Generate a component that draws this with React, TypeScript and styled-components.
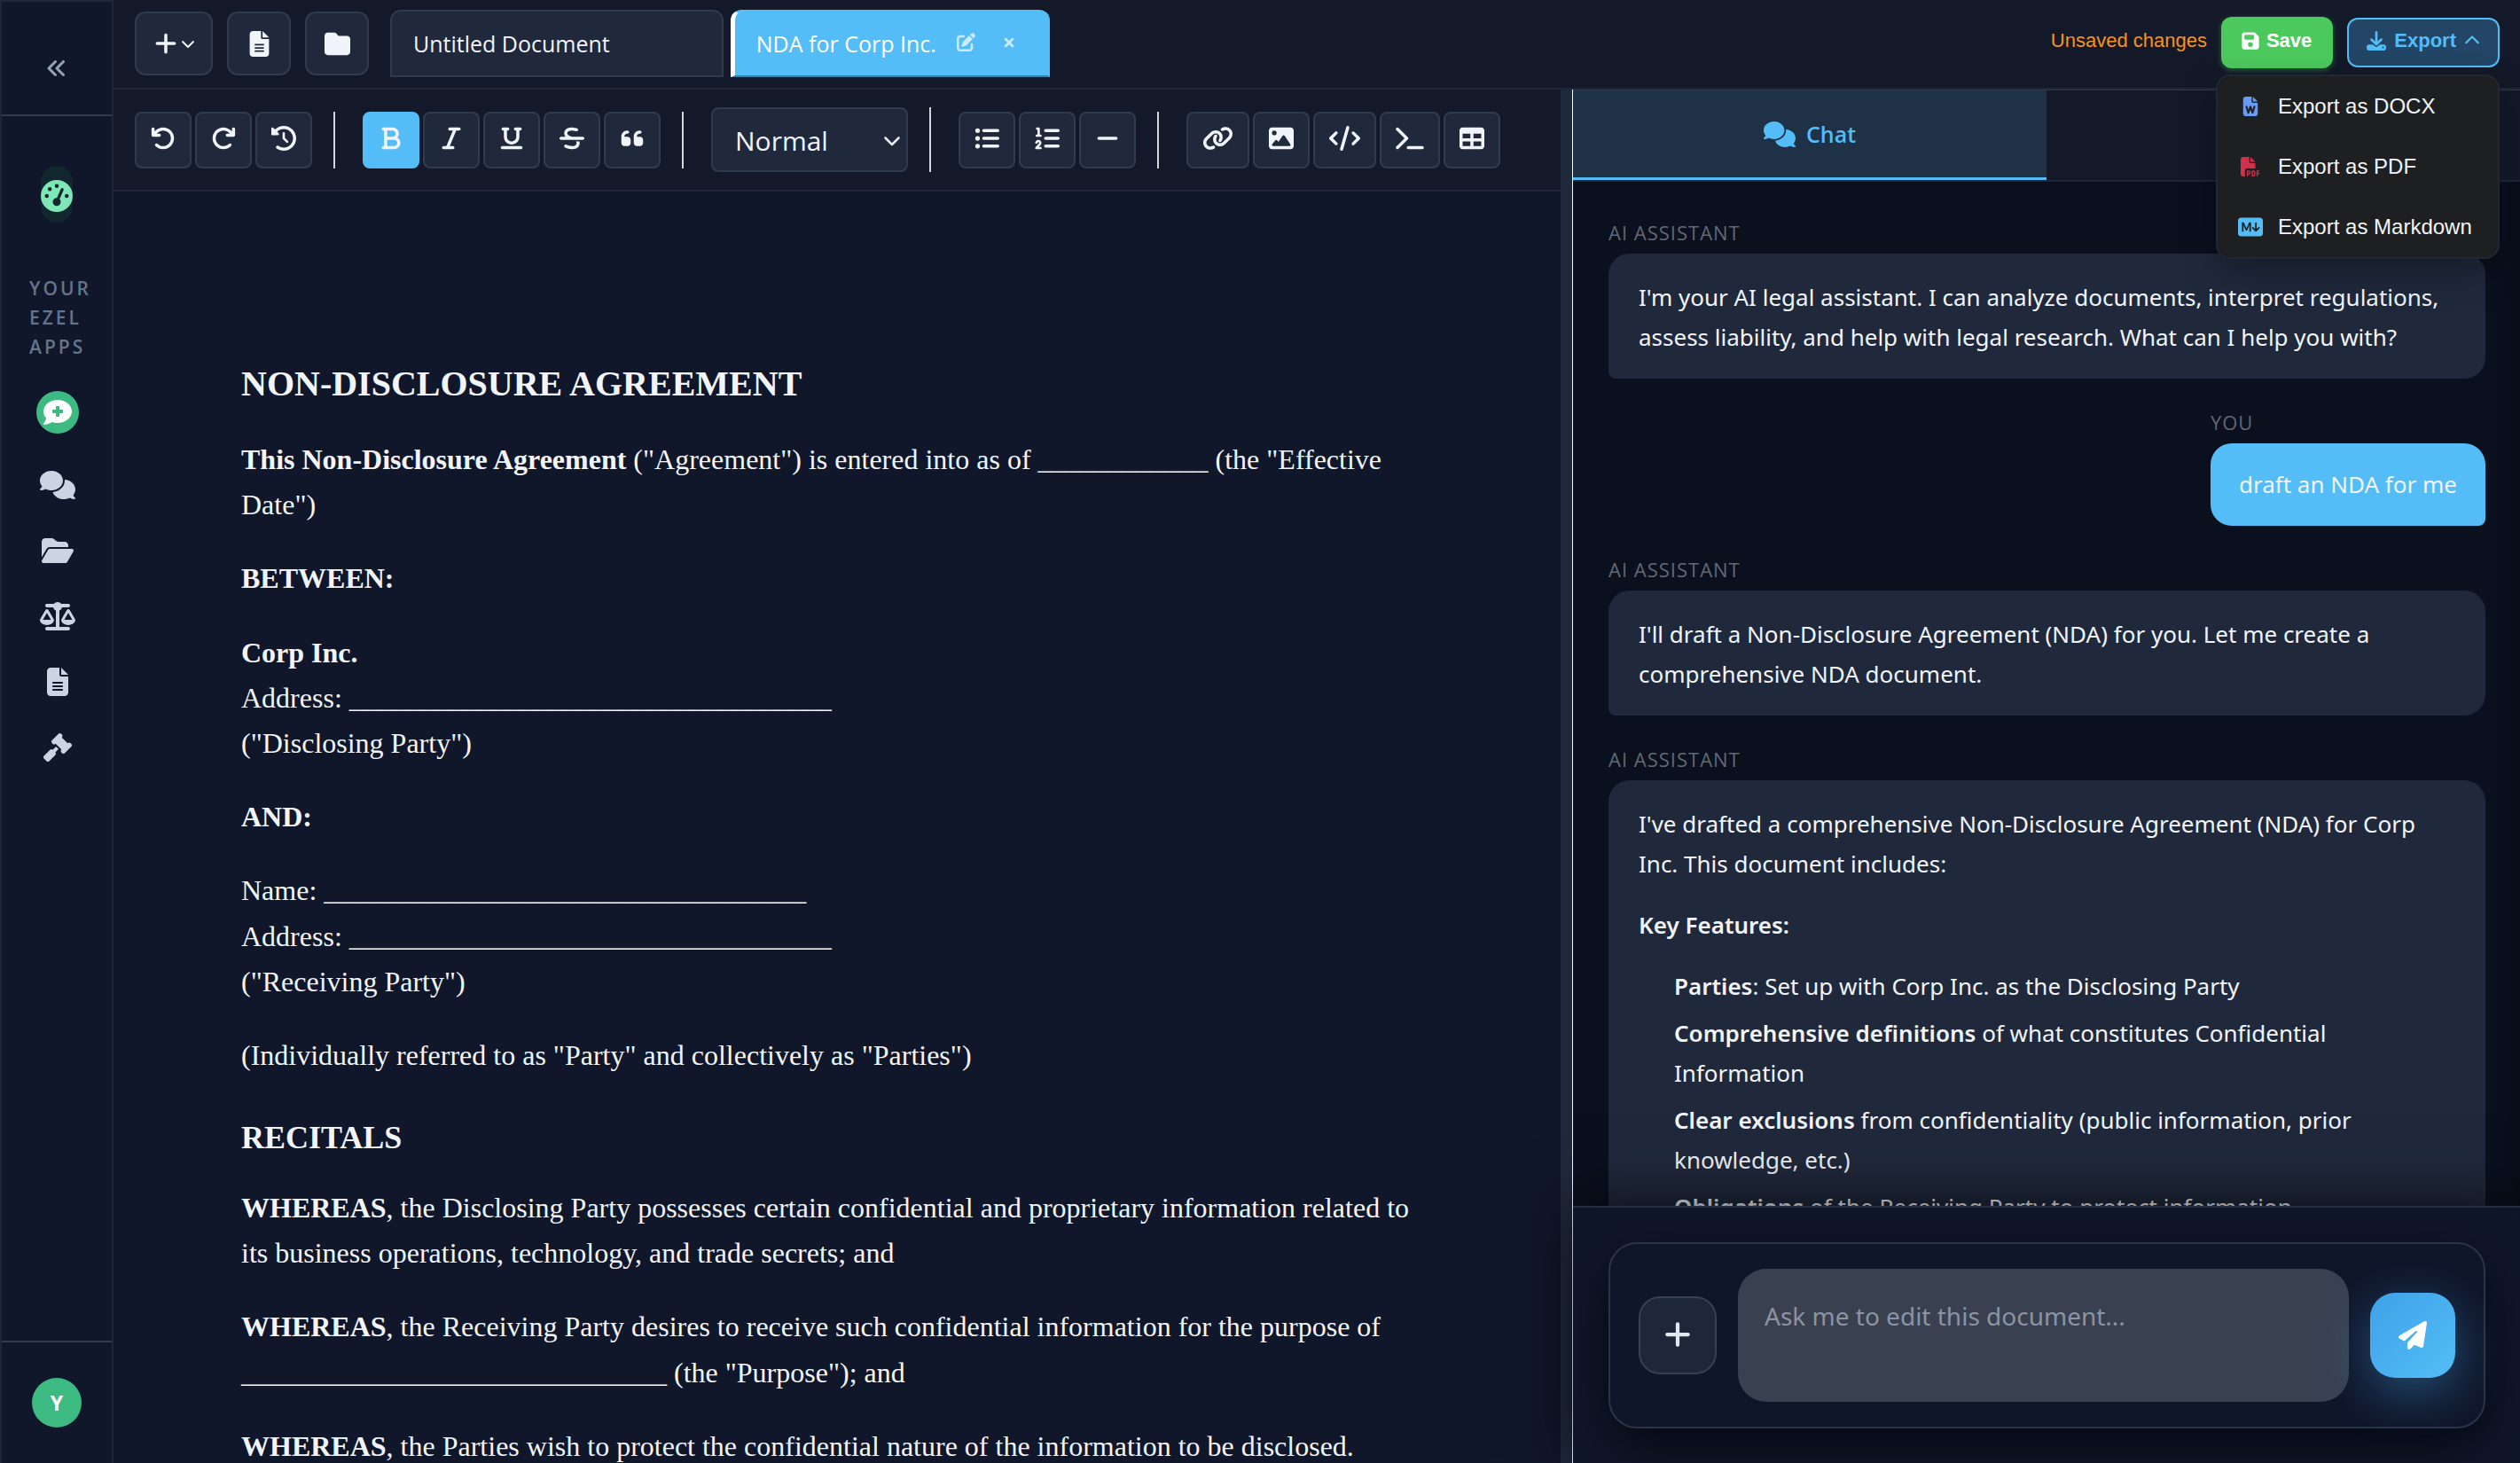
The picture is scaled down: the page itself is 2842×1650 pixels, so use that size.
import React, { useState } from "react";
import styled, { createGlobalStyle, css } from "styled-components";
import {
  FaAnglesLeft,
  FaArrowRotateLeft,
  FaArrowRotateRight,
  FaBold,
  FaChevronDown,
  FaChevronUp,
  FaClockRotateLeft,
  FaCode,
  FaCommentMedical,
  FaComments,
  FaDownload,
  FaFileLines,
  FaFilePdf,
  FaFileWord,
  FaFloppyDisk,
  FaFolder,
  FaFolderOpen,
  FaGaugeHigh,
  FaGavel,
  FaImage,
  FaItalic,
  FaLink,
  FaListOl,
  FaListUl,
  FaMinus,
  FaPaperPlane,
  FaPenToSquare,
  FaPlus,
  FaQuoteLeft,
  FaScaleBalanced,
  FaStrikethrough,
  FaTable,
  FaTerminal,
  FaUnderline,
} from "react-icons/fa6";
import { BsMarkdownFill } from "react-icons/bs";

const sans = `"Open Sans", "Noto Sans", sans-serif`;
const chatSans = `"Noto Sans", "Open Sans", sans-serif`;
const arial = `"Liberation Sans", Arial, sans-serif`;
const serif = `"Liberation Serif", "Times New Roman", serif`;

const c = {
  page: "#10172a",
  bar: "#131928",
  surface: "#20293c",
  border: "#2f3b4e",
  faint: "#1e2737",
  accent: "#54bdf7",
  text: "#f1f5f9",
  chat: "#0a101e",
};

const GlobalStyle = createGlobalStyle`
  *, *::before, *::after { box-sizing: border-box; }
  body { margin: 0; background: ${c.page}; color: ${c.text}; font-family: ${sans}; }
  button { font: inherit; color: inherit; margin: 0; padding: 0; border: 0; background: none; cursor: pointer; }
  svg { display: block; flex: none; }
`;

const Icon = styled.span<{ $size: number; $width?: number }>`
  display: inline-flex;
  flex: none;
  svg {
    height: ${(p) => p.$size}px;
    width: ${(p) => p.$width ?? p.$size}px;
  }
`;

const Shell = styled.div`
  display: flex;
  height: 100vh;
  overflow: hidden;
`;

/* ---------- Sidebar ---------- */

const Sidebar = styled.nav`
  display: flex;
  flex-direction: column;
  flex: none;
  width: 128px;
  border: 2px solid ${c.faint};
  border-bottom: 0;
`;

const CollapseButton = styled.button`
  display: flex;
  align-items: center;
  justify-content: center;
  height: 129px;
  padding-top: 22px;
  border-bottom: 2px solid ${c.border};
  color: #94a3b8;
`;

const DashboardButton = styled.button`
  display: flex;
  align-items: center;
  justify-content: center;
  align-self: center;
  width: 36px;
  height: 64px;
  margin-top: 56px;
  padding-top: 3px;
  border-radius: 18px;
  background: #12272d;
  color: #7de8b5;
`;

const SidebarHeading = styled.h2`
  margin: 58px 0 0 31px;
  font-size: 21px;
  line-height: 33px;
  font-weight: 600;
  letter-spacing: 3px;
  color: #64748b;
`;

const AppList = styled.ul`
  display: flex;
  flex-direction: column;
  align-items: center;
  gap: 26px;
  margin: 33px 0 0;
  padding: 0 0 0 2px;
  list-style: none;
`;

const AppButton = styled.button<{ $primary?: boolean }>`
  display: flex;
  align-items: center;
  justify-content: center;
  width: 48px;
  height: 48px;
  border-radius: 50%;
  color: #cbd5e1;
  ${(p) =>
    p.$primary &&
    css`
      background: #3dba82;
      color: #fff;
      margin-bottom: 8px;
    `}
`;

const SidebarFooter = styled.div`
  display: flex;
  align-items: center;
  justify-content: center;
  height: 138px;
  margin-top: auto;
  border-top: 2px solid ${c.border};
`;

const Avatar = styled.button`
  width: 56px;
  height: 56px;
  border-radius: 50%;
  background: #3dba82;
  color: #fff;
  font-size: 23px;
  font-weight: 700;
`;

/* ---------- Top bar ---------- */

const Main = styled.div`
  display: flex;
  flex-direction: column;
  flex: 1;
  min-width: 0;
`;

const TopBar = styled.header`
  display: flex;
  align-items: center;
  flex: none;
  height: 101px;
  padding: 0 23px 1px 24px;
  background: ${c.bar};
  border-bottom: 2px solid ${c.faint};
`;

const FileButtons = styled.div`
  display: flex;
  gap: 16px;
  margin-right: 24px;
`;

const FileButton = styled.button<{ $wide?: boolean }>`
  display: flex;
  align-items: center;
  justify-content: center;
  gap: 3px;
  width: ${(p) => (p.$wide ? 88 : 72)}px;
  height: 72px;
  border: 2px solid ${c.border};
  border-radius: 12px;
  background: ${c.surface};
`;

const Tabs = styled.div`
  display: flex;
  gap: 8px;
`;

const Tab = styled.div<{ $active?: boolean }>`
  display: flex;
  align-items: center;
  height: 76px;
  padding: 0 24px;
  border: 2px solid ${(p) => (p.$active ? c.accent : c.border)};
  border-radius: 12px 12px 0 0;
  background: ${(p) => (p.$active ? c.accent : c.surface)};
  ${(p) =>
    p.$active &&
    css`
      border-left: 5px solid #fff;
      border-bottom-color: #3f7ea8;
      color: #fff;
    `}
`;

const TabTitle = styled.button`
  font-size: 25px;
  line-height: 40px;
  white-space: nowrap;
`;

const TabActions = styled.div<{ $hidden?: boolean }>`
  display: flex;
  align-items: center;
  gap: 8px;
  margin-left: 14px;
  opacity: ${(p) => (p.$hidden ? 0 : 0.7)};
`;

const TabAction = styled.button`
  display: flex;
  align-items: center;
  justify-content: center;
  width: 40px;
  height: 40px;
  padding-bottom: 3px;
  font-size: 25px;
  font-weight: 700;
  line-height: 1;
`;

const FileActions = styled.div`
  display: flex;
  align-items: center;
  gap: 16px;
  margin-left: auto;
  padding-bottom: 2px;
  font-family: ${arial};
  font-size: 24px;
`;

const Status = styled.span`
  color: #f7931e;
  font-size: 22px;
  line-height: 32px;
  padding-bottom: 4px;
`;

const SaveButton = styled.button`
  display: flex;
  align-items: center;
  gap: 7px;
  height: 58px;
  padding: 0 24px 4px 22px;
  border-radius: 12px;
  background: #4cc95d;
  box-shadow: 0 2px 6px rgba(76, 201, 93, 0.4);
  color: #fff;
  font-size: 22px;
  font-weight: 700;
`;

const ExportWrap = styled.div`
  position: relative;
`;

const ExportButton = styled.button`
  display: flex;
  align-items: center;
  gap: 9px;
  height: 56px;
  padding: 0 20px 4px 20px;
  border: 2px solid ${c.accent};
  border-radius: 12px;
  background: #234666;
  color: ${c.accent};
  font-size: 22px;
  font-weight: 700;
`;

const ExportMenu = styled.ul`
  position: absolute;
  z-index: 10;
  top: 64px;
  right: 0;
  width: 320px;
  margin: 0;
  padding: 0;
  list-style: none;
  border: 2px solid #1f2738;
  border-radius: 16px;
  background: #1e1f21;
  box-shadow: 0 16px 40px rgba(0, 0, 0, 0.3);
`;

const ExportItem = styled.button`
  display: grid;
  grid-template-columns: 40px 1fr;
  column-gap: 11px;
  align-items: center;
  width: 100%;
  height: 68px;
  padding-left: 17px;
  text-align: left;
`;

const ExportIcon = styled.span<{ $color: string }>`
  display: flex;
  justify-content: center;
  color: ${(p) => p.$color};
`;

/* ---------- Editor ---------- */

const Workspace = styled.div`
  display: grid;
  grid-template-columns: minmax(0, 1632fr) 14px minmax(0, 1068fr);
  flex: 1;
  min-height: 0;
`;

const Editor = styled.section`
  display: flex;
  flex-direction: column;
  min-height: 0;
`;

const Toolbar = styled.div`
  display: flex;
  align-items: center;
  gap: 31px;
  flex: none;
  height: 115px;
  padding: 0 24px;
  background: ${c.bar};
  border-bottom: 2px solid ${c.faint};
`;

const ToolGroup = styled.div`
  display: flex;
  gap: 4px;
  &:not(:last-child) {
    padding-right: 24px;
    border-right: 2px solid #d6d6d6;
  }
`;

const ToolButton = styled.button<{ $active?: boolean }>`
  display: flex;
  align-items: center;
  justify-content: center;
  min-width: 64px;
  height: 64px;
  padding: 0 16px 3px;
  border: 2px solid ${(p) => (p.$active ? c.accent : c.border)};
  border-radius: 8px;
  background: ${(p) => (p.$active ? c.accent : c.surface)};
`;

const SelectWrap = styled.label`
  display: grid;
  grid-template-columns: 1fr 36px;
  align-items: center;
  > * {
    grid-row: 1;
  }
`;

const StyleSelect = styled.select`
  grid-column: 1 / -1;
  appearance: none;
  width: 222px;
  height: 73px;
  padding: 2px 25px 0;
  border: 2px solid ${c.border};
  border-radius: 8px;
  background: ${c.surface};
  color: ${c.text};
  font-family: ${sans};
  font-size: 30px;
`;

const SelectArrow = styled.span`
  grid-column: 2;
  display: flex;
  justify-content: center;
  pointer-events: none;
`;

const Page = styled.article`
  flex: 1;
  min-height: 0;
  overflow: hidden;
  padding: 189px 144px 0;
  font-family: ${serif};
  font-size: 32px;
  line-height: 1.6;
  p {
    margin: 0 0 32px;
  }
`;

const DocTitle = styled.h1`
  margin: 0 0 32px;
  font-size: 40px;
  line-height: 56px;
`;

const DocHeading = styled.h2`
  margin: 38px 0 25px;
  font-size: 36px;
  line-height: 58px;
`;

const Splitter = styled.div`
  background: ${c.surface};
  border-right: 1px solid #fff;
`;

/* ---------- Chat ---------- */

const ChatPanel = styled.aside`
  display: flex;
  flex-direction: column;
  min-height: 0;
  background: ${c.chat};
  box-shadow: inset -24px 0 24px -20px rgba(0, 0, 0, 0.3);
`;

const PanelTabs = styled.div`
  display: grid;
  grid-template-columns: 1fr 1fr;
  flex: none;
  height: 104px;
  background: ${c.bar};
  border-top: 1px solid ${c.border};
  border-bottom: 2px solid ${c.faint};
`;

const PanelTab = styled.button<{ $active?: boolean }>`
  display: flex;
  align-items: center;
  justify-content: center;
  gap: 12px;
  font-size: 25px;
  font-weight: 600;
  ${(p) =>
    p.$active &&
    css`
      background: #1e3146;
      border-bottom: 3px solid ${c.accent};
      color: ${c.accent};
    `}
`;

const Messages = styled.div`
  display: flex;
  flex-direction: column;
  gap: 33px;
  flex: 1;
  min-height: 0;
  overflow: hidden;
  padding: 41px 39px 0 40px;
`;

const Message = styled.div<{ $user?: boolean }>`
  display: flex;
  flex-direction: column;
  flex: none;
  align-items: ${(p) => (p.$user ? "flex-start" : "stretch")};
  align-self: ${(p) => (p.$user ? "flex-end" : "stretch")};
`;

const Author = styled.span`
  margin-bottom: 8px;
  font-size: 22px;
  line-height: 32px;
  letter-spacing: 1px;
  color: #626873;
`;

const Bubble = styled.div<{ $user?: boolean }>`
  padding: ${(p) => (p.$user ? "24px 32px" : "27px 34px 24px")};
  border-radius: ${(p) => (p.$user ? "24px 24px 8px 24px" : "24px 24px 24px 8px")};
  background: ${(p) => (p.$user ? c.accent : c.surface)};
  font-family: ${chatSans};
  font-size: 26px;
  line-height: 45px;
  p {
    margin: 0;
  }
  p + p {
    margin-top: 24px;
  }
  b {
    font-weight: 600;
  }
  ul {
    margin: 24px 0 0;
    padding: 0 0 0 40px;
    list-style: none;
  }
  li {
    margin-bottom: 8px;
  }
`;

const ComposerArea = styled.div`
  position: relative;
  flex: none;
  padding: 39px 39px 39px 40px;
  border-top: 2px solid #242c3e;
  background: #10162a;
  box-shadow: 0 -8px 64px rgba(0, 0, 0, 0.6);
`;

const Composer = styled.form`
  display: flex;
  align-items: center;
  gap: 24px;
  padding: 28px 32px;
  border: 2px solid #2b3447;
  border-radius: 32px;
  background: #10162a;
  box-shadow: 0 20px 60px rgba(0, 0, 0, 0.6);
`;

const AttachButton = styled.button`
  display: flex;
  align-items: center;
  justify-content: center;
  flex: none;
  width: 88px;
  height: 88px;
  padding-bottom: 2px;
  border: 2px solid #374151;
  border-radius: 24px;
  background: #1e2737;
  color: #e2e8f0;
`;

const Prompt = styled.textarea`
  flex: 1;
  min-width: 0;
  height: 150px;
  padding: 31px 30px 29px;
  border: 0;
  border-radius: 32px;
  background: #394151;
  color: ${c.text};
  font-family: ${chatSans};
  font-size: 28px;
  line-height: 45px;
  resize: none;
  &::placeholder {
    color: #8b94a3;
    opacity: 1;
  }
`;

const SendButton = styled.button`
  display: flex;
  align-items: center;
  justify-content: center;
  flex: none;
  width: 96px;
  height: 96px;
  border-radius: 28px;
  background: linear-gradient(135deg, #3ea2e7, #54bdf7);
  box-shadow: 0 16px 56px rgba(64, 170, 240, 0.4);
  color: #fff;
`;

const apps = [
  { label: "Chats", icon: <FaComments />, width: 40 },
  { label: "Files", icon: <FaFolderOpen />, width: 36 },
  { label: "Research", icon: <FaScaleBalanced />, width: 40 },
  { label: "Documents", icon: <FaFileLines />, width: 32 },
  { label: "Cases", icon: <FaGavel />, width: 32 },
];

type Tool = { label: string; icon: React.ReactNode; active?: boolean; width?: number };

const toolGroups: Tool[][] = [
  [
    { label: "Undo", icon: <FaArrowRotateLeft /> },
    { label: "Redo", icon: <FaArrowRotateRight /> },
    { label: "History", icon: <FaClockRotateLeft /> },
  ],
  [
    { label: "Bold", icon: <FaBold />, active: true },
    { label: "Italic", icon: <FaItalic /> },
    { label: "Underline", icon: <FaUnderline /> },
    { label: "Strikethrough", icon: <FaStrikethrough /> },
    { label: "Quote", icon: <FaQuoteLeft /> },
  ],
  [
    { label: "Bullet list", icon: <FaListUl /> },
    { label: "Numbered list", icon: <FaListOl /> },
    { label: "Divider", icon: <FaMinus /> },
  ],
  [
    { label: "Link", icon: <FaLink />, width: 35 },
    { label: "Image", icon: <FaImage /> },
    { label: "Code", icon: <FaCode />, width: 35 },
    { label: "Code block", icon: <FaTerminal />, width: 32 },
    { label: "Table", icon: <FaTable /> },
  ],
];

const exportFormats = [
  { label: "Export as DOCX", icon: <FaFileWord />, color: "#6a9bf4", size: 22 },
  { label: "Export as PDF", icon: <FaFilePdf />, color: "#d42f4c", size: 22 },
  { label: "Export as Markdown", icon: <BsMarkdownFill />, color: c.accent, size: 28 },
];

const blank = (n: number) => "_".repeat(n);

const Tools = ({ tools }: { tools: Tool[] }) => (
  <ToolGroup>
    {tools.map((t) => (
      <ToolButton key={t.label} type="button" aria-label={t.label} $active={t.active}>
        <Icon $size={28} $width={t.width}>
          {t.icon}
        </Icon>
      </ToolButton>
    ))}
  </ToolGroup>
);

const DocumentTab = ({ title, active }: { title: string; active?: boolean }) => (
  <Tab $active={active}>
    <TabTitle type="button">{title}</TabTitle>
    <TabActions $hidden={!active}>
      <TabAction type="button" aria-label={`Rename ${title}`}>
        <Icon $size={21}>
          <FaPenToSquare />
        </Icon>
      </TabAction>
      <TabAction type="button" aria-label={`Close ${title}`}>
        {active && "×"}
      </TabAction>
    </TabActions>
  </Tab>
);

const AssistantMessage = ({ children }: { children: React.ReactNode }) => (
  <Message>
    <Author>AI ASSISTANT</Author>
    <Bubble>{children}</Bubble>
  </Message>
);

export default function App() {
  const [menuOpen, setMenuOpen] = useState(true);
  const [block, setBlock] = useState("Normal");
  const [prompt, setPrompt] = useState("");

  return (
    <>
      <GlobalStyle />
      <Shell>
        <Sidebar>
          <CollapseButton type="button" aria-label="Collapse sidebar">
            <Icon $size={24}>
              <FaAnglesLeft />
            </Icon>
          </CollapseButton>
          <DashboardButton type="button" aria-label="Dashboard">
            <Icon $size={36}>
              <FaGaugeHigh />
            </Icon>
          </DashboardButton>
          <SidebarHeading>
            YOUR
            <br />
            EZEL
            <br />
            APPS
          </SidebarHeading>
          <AppList>
            <li>
              <AppButton type="button" aria-label="New chat" $primary>
                <Icon $size={32}>
                  <FaCommentMedical />
                </Icon>
              </AppButton>
            </li>
            {apps.map((a) => (
              <li key={a.label}>
                <AppButton type="button" aria-label={a.label}>
                  <Icon $size={32} $width={a.width}>
                    {a.icon}
                  </Icon>
                </AppButton>
              </li>
            ))}
          </AppList>
          <SidebarFooter>
            <Avatar type="button">Y</Avatar>
          </SidebarFooter>
        </Sidebar>

        <Main>
          <TopBar>
            <FileButtons>
              <FileButton type="button" aria-label="New" $wide>
                <Icon $size={28}>
                  <FaPlus />
                </Icon>
                <Icon $size={16}>
                  <FaChevronDown />
                </Icon>
              </FileButton>
              <FileButton type="button" aria-label="Documents">
                <Icon $size={29}>
                  <FaFileLines />
                </Icon>
              </FileButton>
              <FileButton type="button" aria-label="Folders">
                <Icon $size={29}>
                  <FaFolder />
                </Icon>
              </FileButton>
            </FileButtons>
            <Tabs>
              <DocumentTab title="Untitled Document" />
              <DocumentTab title="NDA for Corp Inc." active />
            </Tabs>
            <FileActions>
              <Status>Unsaved changes</Status>
              <SaveButton type="button">
                <Icon $size={22}>
                  <FaFloppyDisk />
                </Icon>
                Save
              </SaveButton>
              <ExportWrap>
                <ExportButton type="button" aria-expanded={menuOpen} onClick={() => setMenuOpen(!menuOpen)}>
                  <Icon $size={22}>
                    <FaDownload />
                  </Icon>
                  Export
                  <Icon $size={18}>
                    <FaChevronUp />
                  </Icon>
                </ExportButton>
                {menuOpen && (
                  <ExportMenu>
                    {exportFormats.map((f) => (
                      <li key={f.label}>
                        <ExportItem type="button">
                          <ExportIcon $color={f.color}>
                            <Icon $size={f.size}>{f.icon}</Icon>
                          </ExportIcon>
                          {f.label}
                        </ExportItem>
                      </li>
                    ))}
                  </ExportMenu>
                )}
              </ExportWrap>
            </FileActions>
          </TopBar>

          <Workspace>
            <Editor>
              <Toolbar>
                <Tools tools={toolGroups[0]} />
                <Tools tools={toolGroups[1]} />
                <ToolGroup>
                  <SelectWrap>
                    <StyleSelect aria-label="Text style" value={block} onChange={(e) => setBlock(e.target.value)}>
                      <option>Normal</option>
                      <option>Heading 1</option>
                      <option>Heading 2</option>
                    </StyleSelect>
                    <SelectArrow>
                      <Icon $size={20}>
                        <FaChevronDown />
                      </Icon>
                    </SelectArrow>
                  </SelectWrap>
                </ToolGroup>
                <Tools tools={toolGroups[2]} />
                <Tools tools={toolGroups[3]} />
              </Toolbar>
              <Page>
                <DocTitle>NON-DISCLOSURE AGREEMENT</DocTitle>
                <p>
                  <b>This Non-Disclosure Agreement</b> ("Agreement") is entered into as of {blank(12)} (the "Effective
                  Date")
                </p>
                <p>
                  <b>BETWEEN:</b>
                </p>
                <p>
                  <b>Corp Inc.</b>
                  <br />
                  Address: {blank(34)}
                  <br />
                  ("Disclosing Party")
                </p>
                <p>
                  <b>AND:</b>
                </p>
                <p>
                  Name: {blank(34)}
                  <br />
                  Address: {blank(34)}
                  <br />
                  ("Receiving Party")
                </p>
                <p>(Individually referred to as "Party" and collectively as "Parties")</p>
                <DocHeading>RECITALS</DocHeading>
                <p>
                  <b>WHEREAS</b>, the Disclosing Party possesses certain confidential and proprietary information
                  related to its business operations, technology, and trade secrets; and
                </p>
                <p>
                  <b>WHEREAS</b>, the Receiving Party desires to receive such confidential information for the purpose
                  of {blank(30)} (the "Purpose"); and
                </p>
                <p>
                  <b>WHEREAS</b>, the Parties wish to protect the confidential nature of the information to be
                  disclosed.
                </p>
              </Page>
            </Editor>

            <Splitter role="separator" aria-orientation="vertical" />

            <ChatPanel>
              <PanelTabs>
                <PanelTab type="button" $active>
                  <Icon $size={29} $width={36}>
                    <FaComments />
                  </Icon>
                  Chat
                </PanelTab>
                <PanelTab type="button" aria-label="Versions" />
              </PanelTabs>
              <Messages>
                <AssistantMessage>
                  I'm your AI legal assistant. I can analyze documents, interpret regulations, assess liability, and
                  help with legal research. What can I help you with?
                </AssistantMessage>
                <Message $user>
                  <Author>YOU</Author>
                  <Bubble $user>draft an NDA for me</Bubble>
                </Message>
                <AssistantMessage>
                  I'll draft a Non-Disclosure Agreement (NDA) for you. Let me create a comprehensive NDA document.
                </AssistantMessage>
                <AssistantMessage>
                  <p>
                    I've drafted a comprehensive Non-Disclosure Agreement (NDA) for Corp Inc. This document includes:
                  </p>
                  <p>
                    <b>Key Features:</b>
                  </p>
                  <ul>
                    <li>
                      <b>Parties</b>: Set up with Corp Inc. as the Disclosing Party
                    </li>
                    <li>
                      <b>Comprehensive definitions</b> of what constitutes Confidential Information
                    </li>
                    <li>
                      <b>Clear exclusions</b> from confidentiality (public information, prior knowledge, etc.)
                    </li>
                    <li>
                      <b>Obligations</b> of the Receiving Party to protect information
                    </li>
                  </ul>
                </AssistantMessage>
              </Messages>
              <ComposerArea>
                <Composer onSubmit={(e) => e.preventDefault()}>
                  <AttachButton type="button" aria-label="Attach">
                    <Icon $size={34}>
                      <FaPlus />
                    </Icon>
                  </AttachButton>
                  <Prompt
                    aria-label="Message"
                    placeholder="Ask me to edit this document..."
                    value={prompt}
                    onChange={(e) => setPrompt(e.target.value)}
                  />
                  <SendButton type="submit" aria-label="Send">
                    <Icon $size={32}>
                      <FaPaperPlane />
                    </Icon>
                  </SendButton>
                </Composer>
              </ComposerArea>
            </ChatPanel>
          </Workspace>
        </Main>
      </Shell>
    </>
  );
}
